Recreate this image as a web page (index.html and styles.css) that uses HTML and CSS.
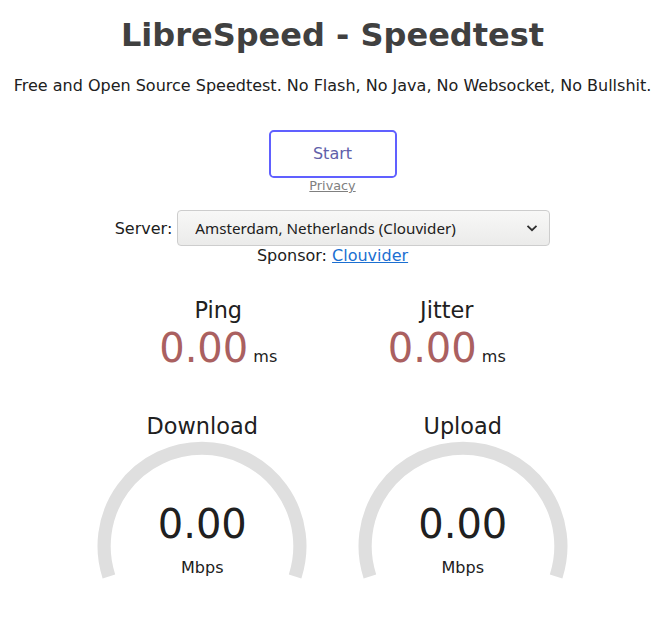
FILE: index.html
```html
<!DOCTYPE html>
<html lang="en">
<head>
  <meta charset="UTF-8">
  <title>LibreSpeed - Speedtest</title>
  <link rel="stylesheet" href="styles.css">
</head>
<body>

  <div class="page">
    <h1>LibreSpeed - Speedtest</h1>
    <p class="tagline">Free and Open Source Speedtest. No Flash, No Java, No Websocket, No Bullshit.</p>

    <!-- Start button + privacy link -->
    <div class="start-btn">Start</div>
    <div class="privacy-line"><a class="privacy" href="#">Privacy</a></div>

    <!-- Server picker -->
    <div class="server-area">
      <span>Server:</span>
      <span class="select-wrap">
        <select id="server">
          <option>Amsterdam, Netherlands (Clouvider)</option>
        </select>
        <svg class="chevron" width="12" height="8" viewBox="0 0 12 8">
          <path d="M1.5 1.8 L6 6.2 L10.5 1.8" fill="none" stroke="#2e2e2e" stroke-width="1.8"/>
        </svg>
      </span>
    </div>
    <div class="sponsor">Sponsor: <a href="#">Clouvider</a></div>

    <div class="test">
      <!-- Ping / Jitter -->
      <div class="test-group">
        <div class="test-area-small">
          <div class="test-name">Ping</div>
          <div class="value-line"><span class="meter-text ping">0.00</span> <span class="unit">ms</span></div>
        </div>
        <div class="test-area-small">
          <div class="test-name">Jitter</div>
          <div class="value-line"><span class="meter-text ping">0.00</span> <span class="unit">ms</span></div>
        </div>
      </div>

      <!-- Download / Upload gauges -->
      <div class="test-group">
        <div class="test-area">
          <svg class="gauge" width="256" height="200" viewBox="0 0 256 200">
            <path d="M34.9 166.45 A97.9 97.9 0 1 1 221.1 166.45" fill="none" stroke="#dfdfdf" stroke-width="13.2"/>
          </svg>
          <div class="test-name">Download</div>
          <div class="meter-text">0.00</div>
          <div class="unit">Mbps</div>
        </div>
        <div class="test-area">
          <svg class="gauge" width="256" height="200" viewBox="0 0 256 200">
            <path d="M34.9 166.45 A97.9 97.9 0 1 1 221.1 166.45" fill="none" stroke="#dfdfdf" stroke-width="13.2"/>
          </svg>
          <div class="test-name">Upload</div>
          <div class="meter-text">0.00</div>
          <div class="unit">Mbps</div>
        </div>
      </div>
    </div>
  </div>

</body>
</html>
```

FILE: styles.css
```css
html, body {
  margin: 0;
  padding: 0;
  border: none;
  background: #ffffff;
  color: #202020;
}

body {
  font-family: "DejaVu Sans", sans-serif;
  font-size: 16px;
}

.page {
  width: 665px;
  text-align: center;
}

h1 {
  color: #404040;
  font-size: 32px;
  margin: 16px 0 0;
}

.tagline {
  margin: 21.6px 0 35.5px;
}

.start-btn {
  display: block;
  margin: 0 auto;
  width: 128px;
  height: 48px;
  box-sizing: border-box;
  border: 2.4px solid #6060ff;
  border-radius: 4.8px;
  color: #6060aa;
  line-height: 43.2px;
  cursor: pointer;
}

.privacy-line {
  font-size: 12.8px;
}

a.privacy {
  color: #808080;
}

.server-area {
  display: flex;
  justify-content: center;
  align-items: center;
  gap: 5px;
  margin-top: 17px;
}

.select-wrap {
  position: relative;
  display: inline-block;
}

#server {
  appearance: none;
  -webkit-appearance: none;
  width: 373px;
  height: 36px;
  padding: 0 36px 0 17px;
  font-family: "Noto Sans", sans-serif;
  font-size: 15.2px;
  color: #202020;
  background: linear-gradient(#f8f8f7, #ebebea);
  border: 1px solid #cdcdcd;
  border-radius: 4px;
  display: block;
}

.chevron {
  position: absolute;
  right: 12px;
  top: 14px;
  pointer-events: none;
}

.sponsor a {
  color: #1b6fd1;
}

.test {
  margin-top: 32px;
}

.test-group {
  display: flex;
  justify-content: center;
  gap: 4.5px;
}

.test-area-small {
  width: 224px;
  height: 113px;
}

.test-name {
  font-size: 22.4px;
}

.value-line {
  margin-top: 2px;
}

.meter-text {
  font-size: 40px;
}

.meter-text.ping {
  color: #aa6060;
}

.test-area {
  position: relative;
  width: 256px;
  height: 200px;
  padding-top: 3.2px;
  box-sizing: border-box;
}

.gauge {
  position: absolute;
  top: 0;
  left: 0;
}

.test-area .test-name,
.test-area .meter-text,
.test-area .unit {
  position: relative;
}

.test-area .meter-text {
  margin-top: 62px;
}

.test-area .unit {
  margin-top: 10.4px;
}
```
